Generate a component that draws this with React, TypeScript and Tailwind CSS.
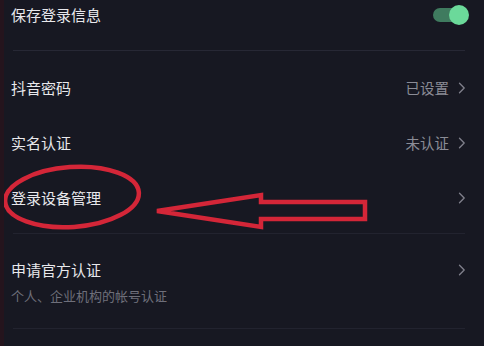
import React from "react";

const font = { fontFamily: '"Noto Sans CJK SC", "Noto Sans", sans-serif' };

function Chevron() {
  return (
    <svg width="8" height="12" viewBox="0 0 8 12" className="shrink-0">
      <path d="M1.5 1.2 L6.2 6 L1.5 10.8" fill="none" stroke="#80818c" strokeWidth="1.3" strokeLinecap="round" strokeLinejoin="round" />
    </svg>
  );
}

function Row({ title, value }: { title: string; value?: string }) {
  return (
    <div className="flex h-[55px] items-center justify-between pl-[11px] pr-[18px]">
      <span className="text-[15px] leading-[20px] text-[#e8e8ec]">{title}</span>
      <div className="flex items-center gap-[9px]">
        {value && <span className="text-[14.5px] leading-[20px] text-[#8b8c96]">{value}</span>}
        <Chevron />
      </div>
    </div>
  );
}

export default function App() {
  return (
    <div className="relative h-[346px] w-[484px] overflow-hidden bg-[#171822] border-l-[4px] border-l-[#24141d]" style={font}>
      <div className="flex h-[30px] items-center justify-between pl-[7px] pr-[17px]">
        <span className="text-[15px] leading-[20px] text-[#e8e8ec]">保存登录信息</span>
        <div className="relative h-[14px] w-[34px] rounded-full bg-[#3f7b5f]">
          <div className="absolute right-[-2px] top-[-3px] h-[20px] w-[20px] rounded-full bg-[#6bd99a]" />
        </div>
      </div>
      <div className="mt-[20px] ml-[9px] mr-[19px] h-px bg-[#272835]" />
      <div className="pt-[9px] -ml-[4px]">
        <Row title="抖音密码" value="已设置" />
        <Row title="实名认证" value="未认证" />
        <Row title="登录设备管理" />
      </div>
      <div className="mt-[8px] ml-[9px] mr-[19px] h-px bg-[#22232f]" />
      <div className="flex items-start justify-between pl-[7px] pr-[18px] pt-[26px] pb-[23px]">
        <div className="flex flex-col">
          <span className="text-[15px] leading-[20px] text-[#e8e8ec]">申请官方认证</span>
          <span className="mt-[7px] text-[13px] leading-[18px] text-[#6e6f7a]">个人、企业机构的帐号认证</span>
        </div>
        <div className="mt-[4px]">
          <Chevron />
        </div>
      </div>
      <div className="ml-[9px] mr-[19px] h-px bg-[#22232f]" />

      <svg className="pointer-events-none absolute left-[-4px] top-0" width="484" height="346" viewBox="0 0 484 346">
        <ellipse cx="72" cy="197" rx="67" ry="30" fill="none" stroke="#d42638" strokeWidth="4.5" transform="rotate(-4 72 197)" />
        <polygon
          points="157,211 261,195 261,202 365,202 365,219 261,219 261,227"
          fill="none"
          stroke="#d42638"
          strokeWidth="4.5"
          strokeLinejoin="miter"
        />
      </svg>
    </div>
  );
}
